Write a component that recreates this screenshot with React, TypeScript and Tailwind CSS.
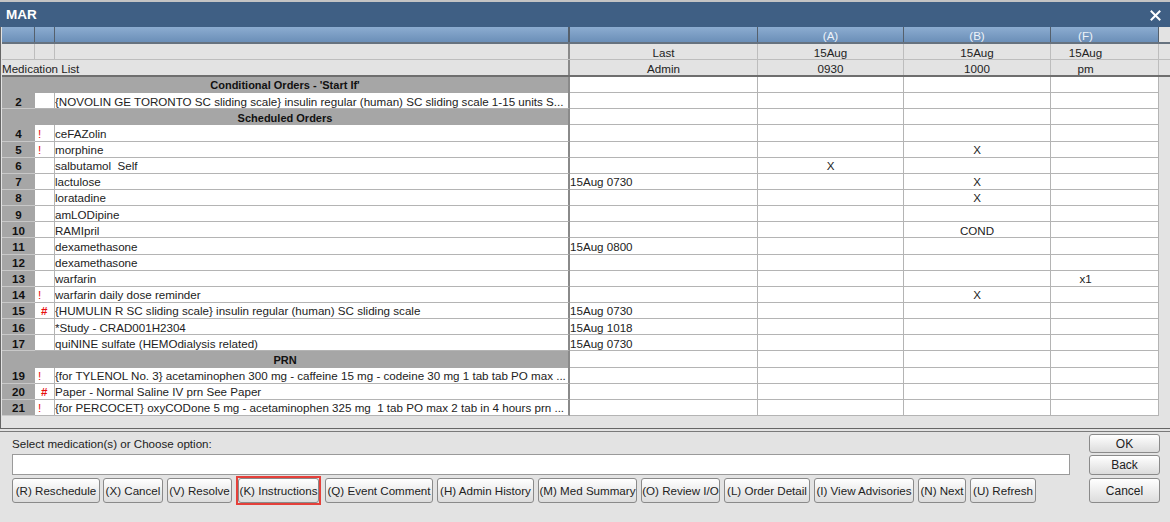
const F = { fontFamily: '"Liberation Sans", Arial, sans-serif' };

type Row =
  | { section: string }
  | { n: string; flag?: string; name: string; last?: string; a?: string; b?: string; f?: string };

const rows: Row[] = [
  { section: "Conditional Orders - 'Start If'" },
  { n: "2", name: "{NOVOLIN GE TORONTO SC sliding scale} insulin regular (human) SC sliding scale 1-15 units S..." },
  { section: "Scheduled Orders" },
  { n: "4", flag: "!", name: "ceFAZolin" },
  { n: "5", flag: "!", name: "morphine", b: "X" },
  { n: "6", name: "salbutamol  Self", a: "X" },
  { n: "7", name: "lactulose", last: "15Aug 0730", b: "X" },
  { n: "8", name: "loratadine", b: "X" },
  { n: "9", name: "amLODipine" },
  { n: "10", name: "RAMIpril", b: "COND" },
  { n: "11", name: "dexamethasone", last: "15Aug 0800" },
  { n: "12", name: "dexamethasone" },
  { n: "13", name: "warfarin", f: "x1" },
  { n: "14", flag: "!", name: "warfarin daily dose reminder", b: "X" },
  { n: "15", flag: "#", name: "{HUMULIN R SC sliding scale} insulin regular (human) SC sliding scale", last: "15Aug 0730" },
  { n: "16", name: "*Study - CRAD001H2304", last: "15Aug 1018" },
  { n: "17", name: "quiNINE sulfate (HEMOdialysis related)", last: "15Aug 0730" },
  { section: "PRN" },
  { n: "19", flag: "!", name: "{for TYLENOL No. 3} acetaminophen 300 mg - caffeine 15 mg - codeine 30 mg 1 tab tab PO max ..." },
  { n: "20", flag: "#", name: "Paper - Normal Saline IV prn See Paper" },
  { n: "21", flag: "!", name: "{for PERCOCET} oxyCODone 5 mg - acetaminophen 325 mg  1 tab PO max 2 tab in 4 hours prn ..." },
];

const buttons: [string, string][] = [
  ["(R) Reschedule", "w-[88px]"],
  ["(X) Cancel", "w-[60px] -ml-px"],
  ["(V) Resolve", "w-[65px]"],
  ["(K) Instructions", "w-[81px] ml-[2px] mr-[2px]"],
  ["(Q) Event Comment", "w-[108px]"],
  ["(H) Admin History", "w-[97px]"],
  ["(M) Med Summary", "w-[99px]"],
  ["(O) Review I/O", "w-[79px]"],
  ["(L) Order Detail", "w-[86px]"],
  ["(I) View Advisories", "w-[100px]"],
  ["(N) Next", "w-[48px]"],
  ["(U) Refresh", "w-[66px]"],
];

const btn =
  "relative flex items-center justify-center whitespace-nowrap rounded-[3px] border border-[#8a8a8a] bg-gradient-to-b from-[#ffffff] to-[#dcdcdc] text-[#222]";

function HeadCells({ a, b, c, d, cls }: { a: string; b: string; c: string; d: string; cls: string }) {
  return (
    <>
      <div className={`w-[188px] ${cls}`}>{a}</div>
      <div className={`w-[146px] ${cls}`}>{b}</div>
      <div className={`w-[147px] ${cls}`}>{c}</div>
      <div className={`w-[108px] pr-[38px] ${cls}`}>{d}</div>
    </>
  );
}

const dataCell = "flex items-center justify-center border-r border-b border-[#b4b4b4] bg-white pt-px text-[11.6px] text-[#222]";
const blue = "bg-gradient-to-b from-[#8cacd0] to-[#6b8fb8]";

export default function App() {
  return (
    <div style={F} className="flex h-[522px] w-[1170px] flex-col overflow-hidden bg-[#e3e3e3]">
      <div className="h-[2px] shrink-0 bg-[#c4c4c4]" />
      <div className="flex h-[25px] shrink-0 items-center justify-between bg-[#3f5f84] pl-[6px] pr-[9px] text-white">
        <span className="text-[13.5px] font-bold leading-none">MAR</span>
        <svg width="11" height="11" viewBox="0 0 11 11" className="mt-[1px]">
          <path d="M1.5 1.5 L9.5 9.5 M9.5 1.5 L1.5 9.5" stroke="#fff" strokeWidth="2" strokeLinecap="square" />
        </svg>
      </div>

      <div className="flex h-[402px] shrink-0 flex-col border-b border-l border-[#666] pl-px">
        <div className="flex h-[17px] shrink-0 border-b-2 border-[#66727f] text-[11.6px] text-[#eef3f9]">
          <div className={`h-full w-[33px] border-r border-[#55606c] ${blue}`} />
          <div className={`h-full w-[20px] border-r border-[#55606c] ${blue}`} />
          <div className={`h-full w-[515px] border-r-2 border-[#55606c] ${blue}`} />
          <HeadCells
            a=""
            b="(A)"
            c="(B)"
            d="(F)"
            cls={`flex h-full items-center justify-center border-r border-[#55606c] pt-[2px] ${blue}`}
          />
        </div>
        <div className="flex h-[16px] shrink-0 border-b border-[#bdbdbd] text-[11.6px] text-[#222]">
          <div className="w-[33px] border-r border-[#bdbdbd]" />
          <div className="w-[20px] border-r border-[#bdbdbd]" />
          <div className="w-[515px] border-r-2 border-[#8a8a8a]" />
          <HeadCells a="Last" b="15Aug" c="15Aug" d="15Aug" cls="flex items-center justify-center border-r border-[#bdbdbd] pt-[2px]" />
        </div>
        <div className="flex h-[17px] shrink-0 border-b-2 border-[#6e6e6e] text-[11.6px] text-[#222]">
          <div className="flex w-[568px] items-center border-r-2 border-[#8a8a8a] pt-[2px]">Medication List</div>
          <HeadCells a="Admin" b="0930" c="1000" d="pm" cls="flex items-center justify-center border-r border-[#bdbdbd] pt-[2px]" />
        </div>

        <div className="grid h-[339px] shrink-0 grid-rows-[repeat(21,minmax(0,1fr))]">
          {rows.map((r, i) => (
            <div key={i} className="flex min-h-0">
              {"section" in r ? (
                <div className="flex w-[568px] items-center justify-center border-r-2 border-[#8a8a8a] bg-[#a6a6a6] pt-px text-[11px] font-bold text-[#111]">
                  {r.section}
                </div>
              ) : (
                <>
                  <div className="flex w-[33px] items-center justify-center border-b border-[#c8c8c8] bg-[#a6a6a6] pt-px text-[11.6px] font-bold text-[#111]">
                    {r.n}
                  </div>
                  <div className="flex w-[20px] items-center border-r border-b border-[#b4b4b4] bg-white pl-[3px] pt-px text-[11.6px] text-[#e81010]">
                    {r.flag === "#" ? <span className="ml-[3px] font-bold">#</span> : r.flag}
                  </div>
                  <div className="flex w-[515px] items-center overflow-hidden whitespace-pre border-r-2 border-b border-r-[#8a8a8a] border-b-[#b4b4b4] bg-white pt-px text-[11.6px] text-[#222]">
                    {r.name}
                  </div>
                </>
              )}
              <div className={`w-[188px] !justify-start ${dataCell}`}>{"section" in r ? "" : r.last}</div>
              <div className={`w-[146px] ${dataCell}`}>{"section" in r ? "" : r.a}</div>
              <div className={`w-[147px] ${dataCell}`}>{"section" in r ? "" : r.b}</div>
              <div className={`w-[108px] pr-[38px] ${dataCell}`}>{"section" in r ? "" : r.f}</div>
            </div>
          ))}
        </div>
        <div className="min-h-0 flex-1" />
      </div>

      <div className="mt-[2px] flex min-h-0 flex-1 border-t border-[#7a7a7a] pl-[12px] pt-px">
        <div className="flex w-[1058px] flex-col">
          <div className="flex h-[20px] items-end pb-[1px] text-[11.6px] text-[#222]">Select medication(s) or Choose option:</div>
          <div className="mt-[1px] h-[21px] shrink-0 border border-[#9a9a9a] bg-white" />
          <div className="mt-[3px] flex h-[25px] gap-[4px]">
            {buttons.map(([t, w]) => (
              <div key={t} className={`${btn} ${w} pt-px text-[11.6px]`}>
                {t}
                {t.startsWith("(K)") && (
                  <span className="absolute -inset-x-[3px] -top-[3px] -bottom-[3px] border-2 border-[#e5403a]" />
                )}
              </div>
            ))}
          </div>
        </div>
        <div className="ml-[19px] flex w-[71px] flex-col">
          <div className={`${btn} mt-px h-[19px] text-[12px]`}>OK</div>
          <div className={`${btn} mt-[2px] h-[20px] text-[12px]`}>Back</div>
          <div className={`${btn} mt-[3px] h-[25px] pt-px text-[12px]`}>Cancel</div>
        </div>
      </div>
    </div>
  );
}
